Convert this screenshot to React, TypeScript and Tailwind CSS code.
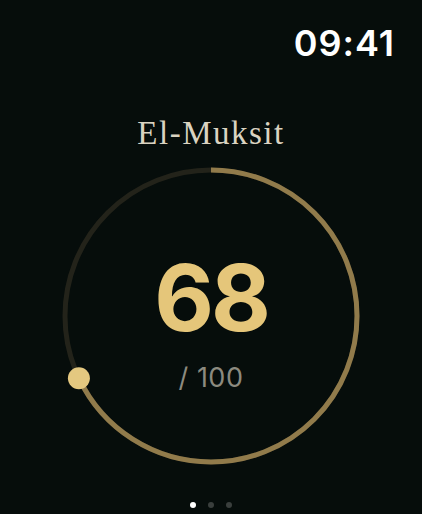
export default function App() {
  const r = 146;
  const c = 2 * Math.PI * r;
  const value = 68;
  const angle = (value / 100) * 2 * Math.PI;
  const kx = 152 + r * Math.sin(angle);
  const ky = 152 - r * Math.cos(angle);

  return (
    <div className="flex h-[514px] w-[422px] flex-col items-center overflow-hidden bg-[#060d0b]">
      <div className="flex w-full justify-end pr-[27px] pt-[25px]">
        <span className="font-['Inter',sans-serif] text-[36px] font-semibold leading-none tracking-[1px] text-white">
          09:41
        </span>
      </div>

      <h1 className="mt-[56px] font-['Liberation_Serif',serif] text-[33px] leading-none tracking-[1.5px] text-[#dad3c1]">
        El-Muksit
      </h1>

      <div className="relative mt-[14px] h-[304px] w-[304px]">
        <svg width="304" height="304" viewBox="0 0 304 304">
          <circle cx="152" cy="152" r={r} fill="none" stroke="#23231a" strokeWidth="5" />
          <circle
            cx="152"
            cy="152"
            r={r}
            fill="none"
            stroke="#917b4b"
            strokeWidth="5"
            strokeDasharray={`${(value / 100) * c} ${c}`}
            transform="rotate(-90 152 152)"
          />
          <circle cx={kx} cy={ky} r="11" fill="#e4c880" />
        </svg>
        <div className="absolute inset-0 flex flex-col items-center pt-[88px] font-['Inter',sans-serif]">
          <span className="text-[92px] font-bold leading-none tracking-[-3px] text-[#e5c67a]">
            68
          </span>
          <span className="mt-[20px] text-[27px] leading-none tracking-[0.5px] text-[#8c8a7f]">/ 100</span>
        </div>
      </div>

      <div className="mt-[34px] flex items-center gap-[12px]">
        <span className="h-[6px] w-[6px] rounded-full bg-white" />
        <span className="h-[6px] w-[6px] rounded-full bg-[#3a3f3d]" />
        <span className="h-[6px] w-[6px] rounded-full bg-[#3a3f3d]" />
      </div>
    </div>
  );
}
